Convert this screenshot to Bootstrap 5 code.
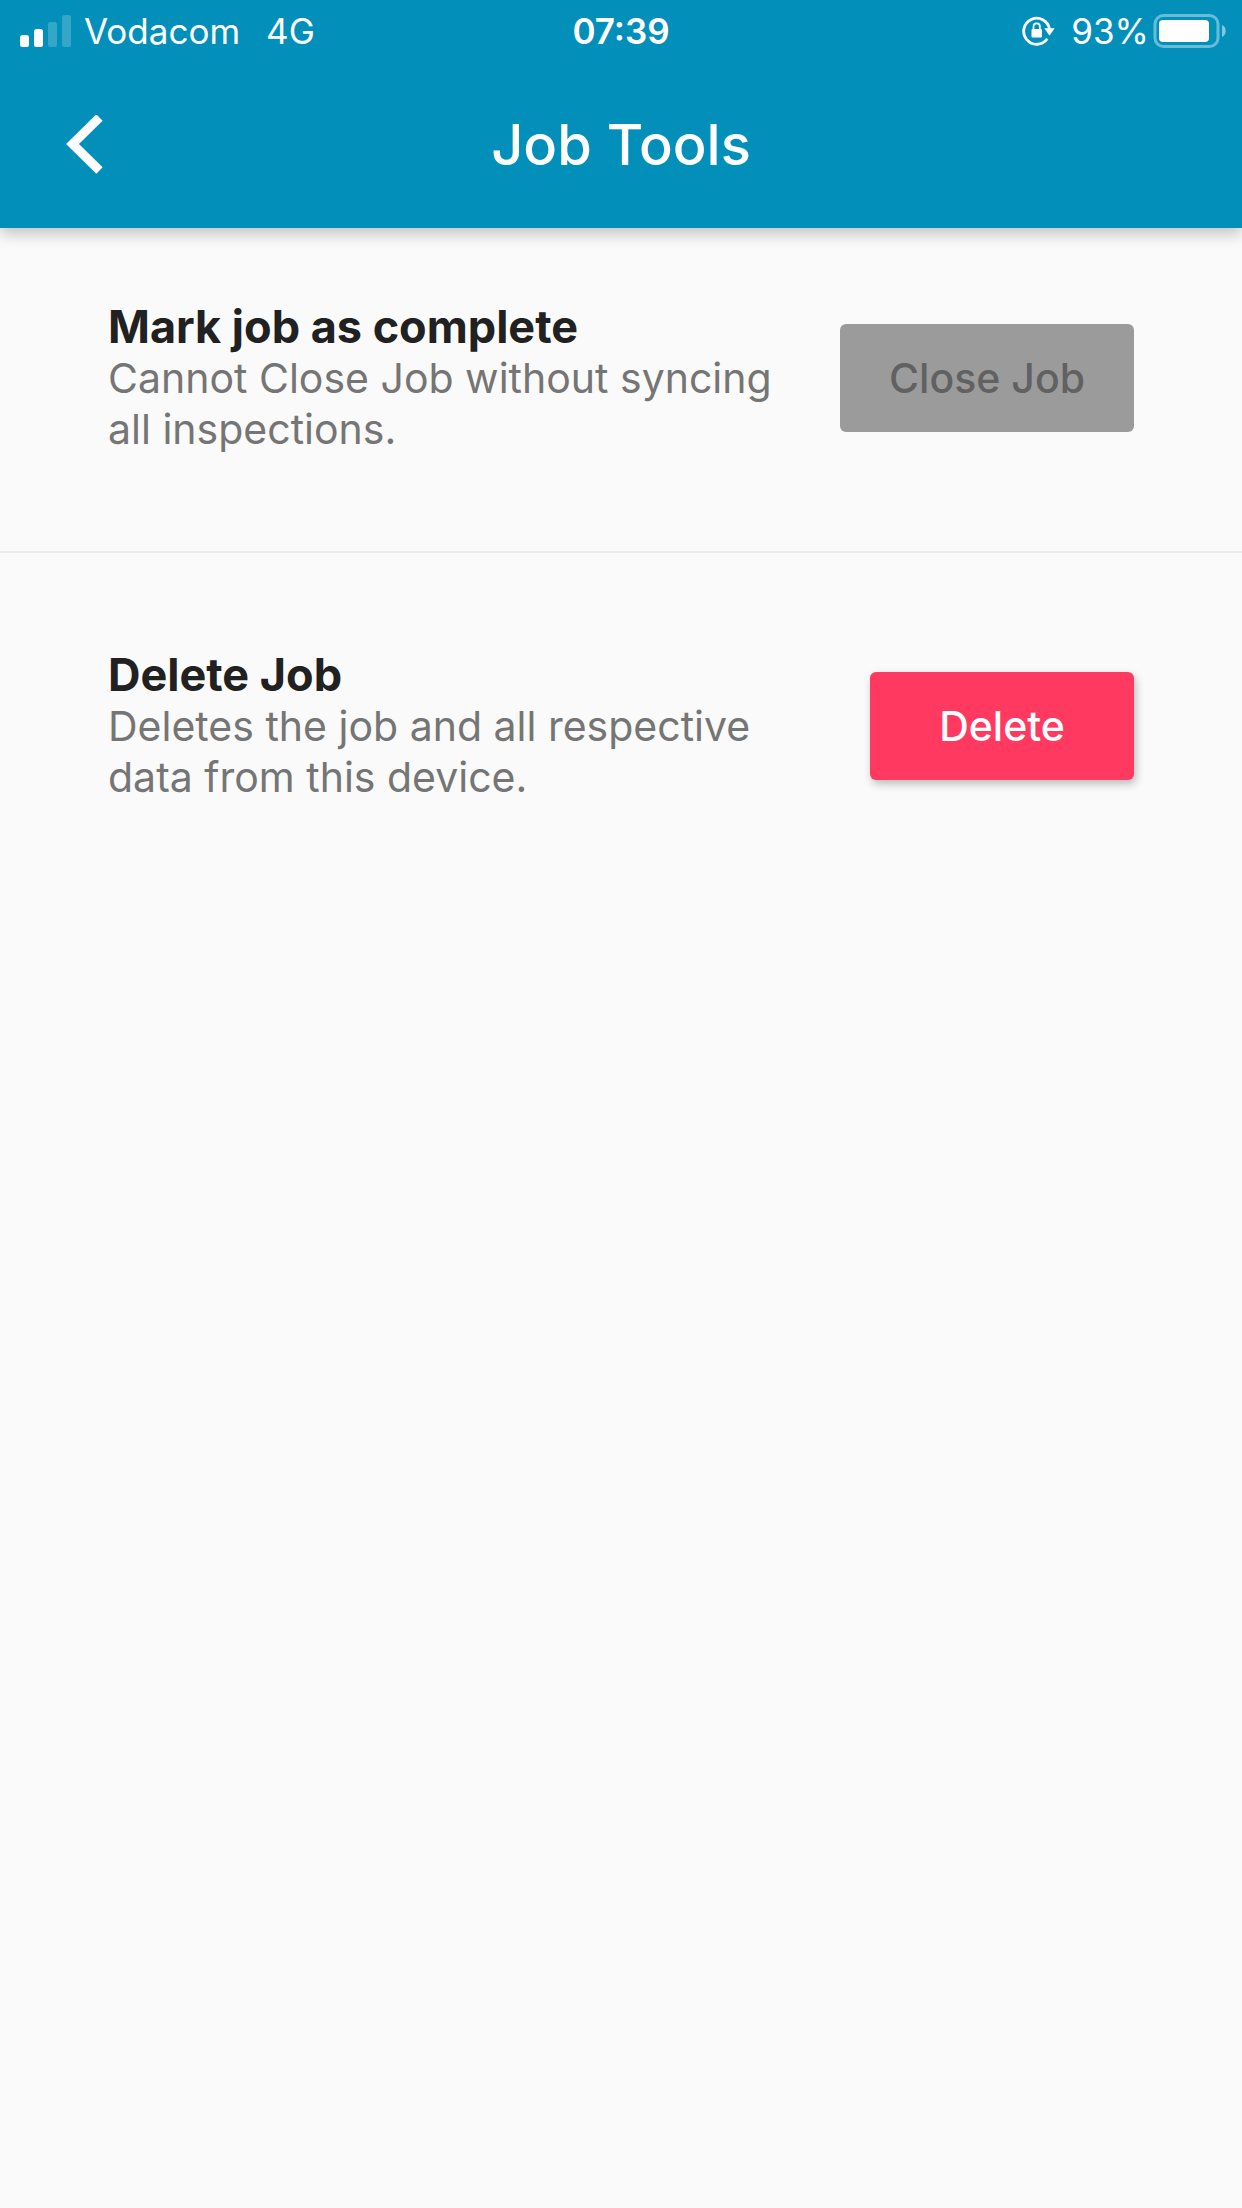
<!DOCTYPE html>
<html lang="en">
<head>
<meta charset="utf-8">
<meta name="viewport" content="width=device-width, initial-scale=1">
<title>Job Tools</title>
<link href="https://cdn.jsdelivr.net/npm/bootstrap@5.3.0/dist/css/bootstrap.min.css" rel="stylesheet">
<style>
  body { font-family: Inter, "Liberation Sans", sans-serif; background: #fafafa; color: #212121; }
  .app-header { background: #0290bb; color: #fff; box-shadow: 0 6px 14px rgba(0, 0, 0, .22); }
  .status-bar { height: 62px; padding: 0 16px; font-size: 35px; line-height: 62px; }
  .side { flex: 1 1 0; }
  .network { margin-left: 26px; }
  .carrier { margin-left: 13px; }
  .title-bar { height: 166px; padding: 0 60px; }
  .title-bar h1 { font-size: 56px; line-height: 72px; font-weight: 500; }
  .back-link { color: #fff; }
  .tool-item { padding: 96px 108px; }
  .tool-item:first-child { padding-top: 73px; border-bottom: 2px solid #ebebeb; }
  .tool-item h2 { font-size: 45px; line-height: 52px; }
  .tool-item p { font-size: 41px; line-height: 51px; color: #757575; }
  .tool-btn { height: 108px; min-width: 264px; padding: 0 49px; font-size: 41px; line-height: 51px; font-weight: 500; border: 0; border-radius: 6px; }
  .btn-close-job, .btn-close-job:disabled { background: #9b9b9b; color: #616161; opacity: 1; }
  .btn-delete { background: #ff395f; color: #fff; box-shadow: 2px 4px 8px rgba(0, 0, 0, .25); }
  .btn-delete:hover { background: #e82f54; color: #fff; }
</style>
<script src="https://cdn.jsdelivr.net/npm/bootstrap@5.3.0/dist/js/bootstrap.bundle.min.js"></script>
</head>
<body>
<header class="app-header position-relative">
  <div class="status-bar d-flex align-items-center">
    <div class="side d-flex align-items-center">
      <svg class="ms-1" width="51" height="32" viewBox="0 0 51 32" fill="#fff" role="img" aria-label="Signal, two of four bars">
        <rect y="20" width="9" height="12" rx="2.5"/><rect x="14" y="14" width="9" height="18" rx="2.5"/>
        <rect x="28" y="7" width="9" height="25" rx="2.5" opacity=".2"/><rect x="42" width="9" height="32" rx="2.5" opacity=".2"/>
      </svg>
      <span class="carrier">Vodacom</span><span class="network">4G</span>
    </div>
    <div class="fw-semibold">07:39</div>
    <div class="side d-flex align-items-center justify-content-end">
      <svg class="me-3" width="33" height="30" viewBox="0 0 33 30" fill="none" stroke="#fff" role="img" aria-label="Rotation lock">
        <path d="M27.5 13A13 13 0 1 0 25.3 22.8" stroke-width="2.8"/>
        <path d="M22.8 12.5h9.400L27.5 19.2z" fill="#fff" stroke="#fff" stroke-width=".6" stroke-linejoin="round"/>
        <rect x="9.5" y="13" width="10.500" height="8.500" rx="1" fill="#fff" stroke="none"/>
        <path d="M11.5 13.500v-3a3.200 3.200 0 0 1 6.400 0v3" stroke-width="1.700"/>
      </svg>
      <span>93%</span>
      <svg class="ms-1" width="73" height="34" viewBox="0 0 73 34" role="img" aria-label="Battery">
        <rect x="2" y="1.500" width="63" height="31" rx="8.500" fill="none" stroke="#fff" stroke-width="3" opacity=".4"/>
        <rect x="6" y="6" width="50" height="22" rx="4" fill="#fff"/>
        <path d="M69 11c5 2 5 10 0 12z" fill="#fff" opacity=".5"/>
      </svg>
    </div>
  </div>
  <div class="title-bar d-flex align-items-center">
    <div class="side d-flex"><a class="back-link d-inline-flex" href="#" aria-label="Back">
      <svg width="48" height="60" viewBox="0 0 48 60" fill="none" stroke="currentColor" stroke-width="9"><path d="M39.500 2.500 12.500 29l27 26.500"/></svg>
    </a></div>
    <h1 class="mb-0">Job Tools</h1>
    <div class="side"></div>
  </div>
</header>
<main>
  <section class="tool-item d-flex align-items-center justify-content-between gap-5">
    <div><h2 class="fw-bold mb-0">Mark job as complete</h2><p class="mb-0">Cannot Close Job without syncing all inspections.</p></div>
    <button type="button" class="btn tool-btn btn-close-job flex-shrink-0" disabled>Close Job</button>
  </section>
  <section class="tool-item d-flex align-items-center justify-content-between gap-5">
    <div><h2 class="fw-bold mb-0">Delete Job</h2><p class="mb-0">Deletes the job and all respective data from this device.</p></div>
    <button type="button" class="btn tool-btn btn-delete flex-shrink-0">Delete</button>
  </section>
</main>
</body>
</html>
